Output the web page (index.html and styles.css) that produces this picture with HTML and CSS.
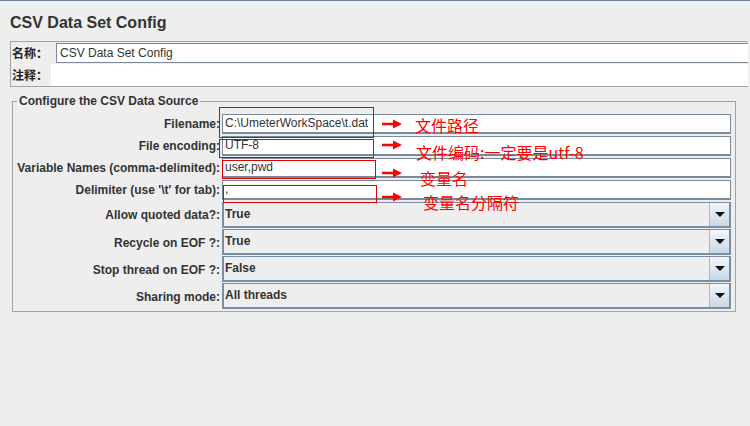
FILE: index.html
```html
<!DOCTYPE html>
<html>
<head>
<meta charset="utf-8">
<link rel="stylesheet" href="styles.css">
</head>
<body>
<div class="page">
  <h1 class="title">CSV Data Set Config</h1>
  <div class="namebox">
    <div class="nrow">
      <span class="nlabel">名称：</span>
      <div class="nfield">CSV Data Set Config</div>
    </div>
    <div class="nrow">
      <span class="nlabel">注释：</span>
      <div class="cfield"></div>
    </div>
  </div>
  <fieldset class="source">
    <legend class="legend">Configure the CSV Data Source</legend>
    <div class="form">
      <label class="flabel">Filename:</label>
      <div class="tfield">C:\UmeterWorkSpace\t.dat</div>
      <label class="flabel">File encoding:</label>
      <div class="tfield">UTF-8</div>
      <label class="flabel">Variable Names (comma-delimited):</label>
      <div class="tfield">user,pwd</div>
      <label class="flabel">Delimiter (use '\t' for tab):</label>
      <div class="tfield">,</div>
      <label class="flabel">Allow quoted data?:</label>
      <div class="combo"><span class="cval">True</span><span class="cbtn"><span class="tri"></span></span></div>
      <label class="flabel">Recycle on EOF ?:</label>
      <div class="combo"><span class="cval">True</span><span class="cbtn"><span class="tri"></span></span></div>
      <label class="flabel">Stop thread on EOF ?:</label>
      <div class="combo"><span class="cval">False</span><span class="cbtn"><span class="tri"></span></span></div>
      <label class="flabel">Sharing mode:</label>
      <div class="combo"><span class="cval">All threads</span><span class="cbtn"><span class="tri"></span></span></div>
    </div>
  </fieldset>

  <div class="mark m1"></div>
  <div class="mark m2"></div>
  <div class="mark m3"></div>
  <div class="mark m4"></div>

  <svg class="arrow a1" width="22" height="10" viewBox="0 0 22 10"><path d="M0 3.8 H11 V0.5 L20 5 L11 9.5 V6.2 H0 Z" fill="#ff0000"/></svg>
  <svg class="arrow a2" width="22" height="10" viewBox="0 0 22 10"><path d="M0 3.8 H11 V0.5 L20 5 L11 9.5 V6.2 H0 Z" fill="#ff0000"/></svg>
  <svg class="arrow a3" width="22" height="10" viewBox="0 0 22 10"><path d="M0 3.8 H11 V0.5 L20 5 L11 9.5 V6.2 H0 Z" fill="#ff0000"/></svg>
  <svg class="arrow a4" width="22" height="10" viewBox="0 0 22 10"><path d="M0 3.8 H11 V0.5 L20 5 L11 9.5 V6.2 H0 Z" fill="#ff0000"/></svg>

  <div class="note n1">文件路径</div>
  <div class="note n2">文件编码:一定要是utf-8</div>
  <div class="note n3">变量名</div>
  <div class="note n4">变量名分隔符</div>
</div>
</body>
</html>
```

FILE: styles.css
```css
html, body {
  margin: 0;
  padding: 0;
  background: #eeeeee;
}
.page {
  position: relative;
  width: 750px;
  height: 426px;
  box-sizing: border-box;
  border-top: 1px solid #6f8194;
  font-family: "Liberation Sans", Arial, "Noto Sans CJK SC", sans-serif;
  color: #333333;
  overflow: hidden;
}
.title {
  margin: 12px 0 0 10px;
  font-size: 16px;
  line-height: 20px;
  font-weight: bold;
  color: #333333;
}
.namebox {
  margin: 8px 0 0 10px;
  width: 738px;
  box-sizing: border-box;
  border: 1px solid #a3a3a3;
  border-right: none;
}
.nrow {
  display: flex;
  align-items: center;
  height: 22px;
}
.nlabel {
  font-family: "Noto Sans CJK SC", sans-serif;
  font-weight: bold;
  font-size: 12px;
  color: #222;
  width: 44px;
  padding-left: 1px;
  line-height: 14px;
}
.nfield {
  flex: 1;
  height: 20px;
  box-sizing: border-box;
  background: #fff;
  border: 1px solid #7a8a99;
  border-right: none;
  font-size: 12px;
  line-height: 18px;
  padding-left: 3px;
  color: #333;
}
.nrow + .nrow .nlabel { width: 39px; }
.cfield {
  flex: 1;
  height: 22px;
  background: #fff;
}
.source {
  margin: 7px 0 0 12px;
  width: 724px;
  box-sizing: border-box;
  padding: 0;
  border: 1px solid #a3a3a3;
  min-width: 0;
}
.legend {
  margin-left: 4px;
  padding: 0 2px;
  font-size: 12px;
  font-weight: bold;
  line-height: 14px;
  color: #333;
}
.form {
  display: grid;
  grid-template-columns: 203px 1fr;
  column-gap: 2px;
  row-gap: 2px;
  padding: 6px 4px 2px 4px;
  align-items: center;
}
.flabel {
  text-align: right;
  font-size: 12px;
  font-weight: bold;
  color: #333;
  white-space: nowrap;
}
.tfield {
  height: 20px;
  box-sizing: border-box;
  background: #fff;
  border: 1px solid #7a8a99;
  border-bottom: 2px solid #7a8a99;
  font-size: 12px;
  line-height: 17px;
  padding-left: 2px;
  color: #333;
}
.combo {
  height: 26px;
  box-sizing: border-box;
  display: flex;
  border: 2px solid #7a8ea3;
  border-top-width: 1px;
  background: #eeeeee;
}
.combo ~ .combo { margin-top: -1px; }
.cval {
  flex: 1;
  font-size: 12px;
  font-weight: bold;
  line-height: 22px;
  padding-left: 1px;
  color: #333;
}
.cbtn {
  width: 19px;
  border-left: 1px solid #a7b8c9;
  background: linear-gradient(#f4f7fa, #c8d8e8);
  display: flex;
  align-items: center;
  justify-content: center;
}
.tri {
  width: 0;
  height: 0;
  border-left: 5px solid transparent;
  border-right: 5px solid transparent;
  border-top: 5px solid #111;
}
.mark {
  position: absolute;
  box-sizing: border-box;
  border: 1px solid #e00000;
}
.m1 { left: 219px; top: 106px; width: 155px; height: 31px; }
.m2 { left: 219px; top: 138px; width: 155px; height: 19px; }
.m3 { left: 222px; top: 159px; width: 154px; height: 19px; }
.m4 { left: 223px; top: 184px; width: 154px; height: 18px; }
.arrow { position: absolute; left: 382px; }
.a1 { top: 118px; }
.a2 { top: 139px; }
.a3 { top: 167px; }
.a4 { top: 191px; }
.note {
  position: absolute;
  font-family: "Noto Sans CJK SC", sans-serif;
  font-size: 16px;
  line-height: 18px;
  color: #ff0000;
  white-space: nowrap;
}
.n1 { left: 415px; top: 115px; }
.n2 { left: 416px; top: 142px; }
.n3 { left: 420px; top: 168px; }
.n4 { left: 423px; top: 192px; }
```
